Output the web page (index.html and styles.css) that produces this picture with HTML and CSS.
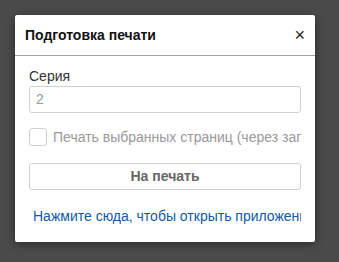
FILE: index.html
```html
<!DOCTYPE html>
<html>
<head>
<meta charset="utf-8">
<link rel="stylesheet" href="styles.css">
</head>
<body>
<div class="dialog">
  <div class="dialog-header">
    <div class="dialog-title">Подготовка печати</div>
    <div class="close">×</div>
  </div>
  <div class="dialog-body">
    <div class="label">Серия</div>
    <div class="input">2</div>
    <div class="check-row">
      <span class="checkbox"></span>
      <span class="check-text">Печать выбранных страниц (через запятую)</span>
    </div>
    <div class="button">На печать</div>
    <div class="link">Нажмите сюда, чтобы открыть приложение</div>
  </div>
</div>
</body>
</html>
```
FILE: styles.css
```css
html, body {
  margin: 0;
  padding: 0;
}
body {
  background: #4a4a4a;
  width: 339px;
  height: 262px;
  overflow: hidden;
  font-family: "Liberation Sans", Arial, sans-serif;
  font-size: 14px;
  color: #333;
}
.dialog {
  margin: 15px 0 0 15px;
  width: 300px;
  height: 227px;
  background: #fff;
  border-radius: 2px;
  box-shadow: 0 2px 8px rgba(0, 0, 0, 0.45);
  display: flex;
  flex-direction: column;
}
.dialog-header {
  height: 40px;
  border-bottom: 1px solid #a0a0a0;
  display: flex;
  align-items: center;
  justify-content: space-between;
  padding: 0 10px;
}
.dialog-title {
  font-weight: bold;
  font-size: 14px;
  color: #111;
}
.close {
  font-size: 18px;
  line-height: 18px;
  color: #222;
  margin-right: 0;
}
.dialog-body {
  padding: 10px 14px 0 14px;
  display: flex;
  flex-direction: column;
  overflow: hidden;
}
.label {
  line-height: 20px;
  color: #333;
}
.input {
  height: 25px;
  border: 1px solid #d0d0d0;
  border-radius: 3px;
  padding-left: 6px;
  line-height: 25px;
  color: #999;
}
.check-row {
  margin-top: 15px;
  display: flex;
  align-items: center;
  white-space: nowrap;
  overflow: hidden;
  height: 18px;
}
.checkbox {
  flex: none;
  width: 16px;
  height: 16px;
  border: 1px solid #cfcfcf;
  border-radius: 3px;
  margin-right: 6px;
}
.check-text {
  color: #999;
}
.button {
  margin-top: 17px;
  height: 25px;
  border: 1px solid #d0d0d0;
  border-radius: 3px;
  line-height: 25px;
  text-align: center;
  font-weight: bold;
  color: #666;
}
.link {
  margin-top: 16px;
  line-height: 20px;
  padding-left: 4px;
  color: #1059a3;
  white-space: nowrap;
  overflow: hidden;
}
```
